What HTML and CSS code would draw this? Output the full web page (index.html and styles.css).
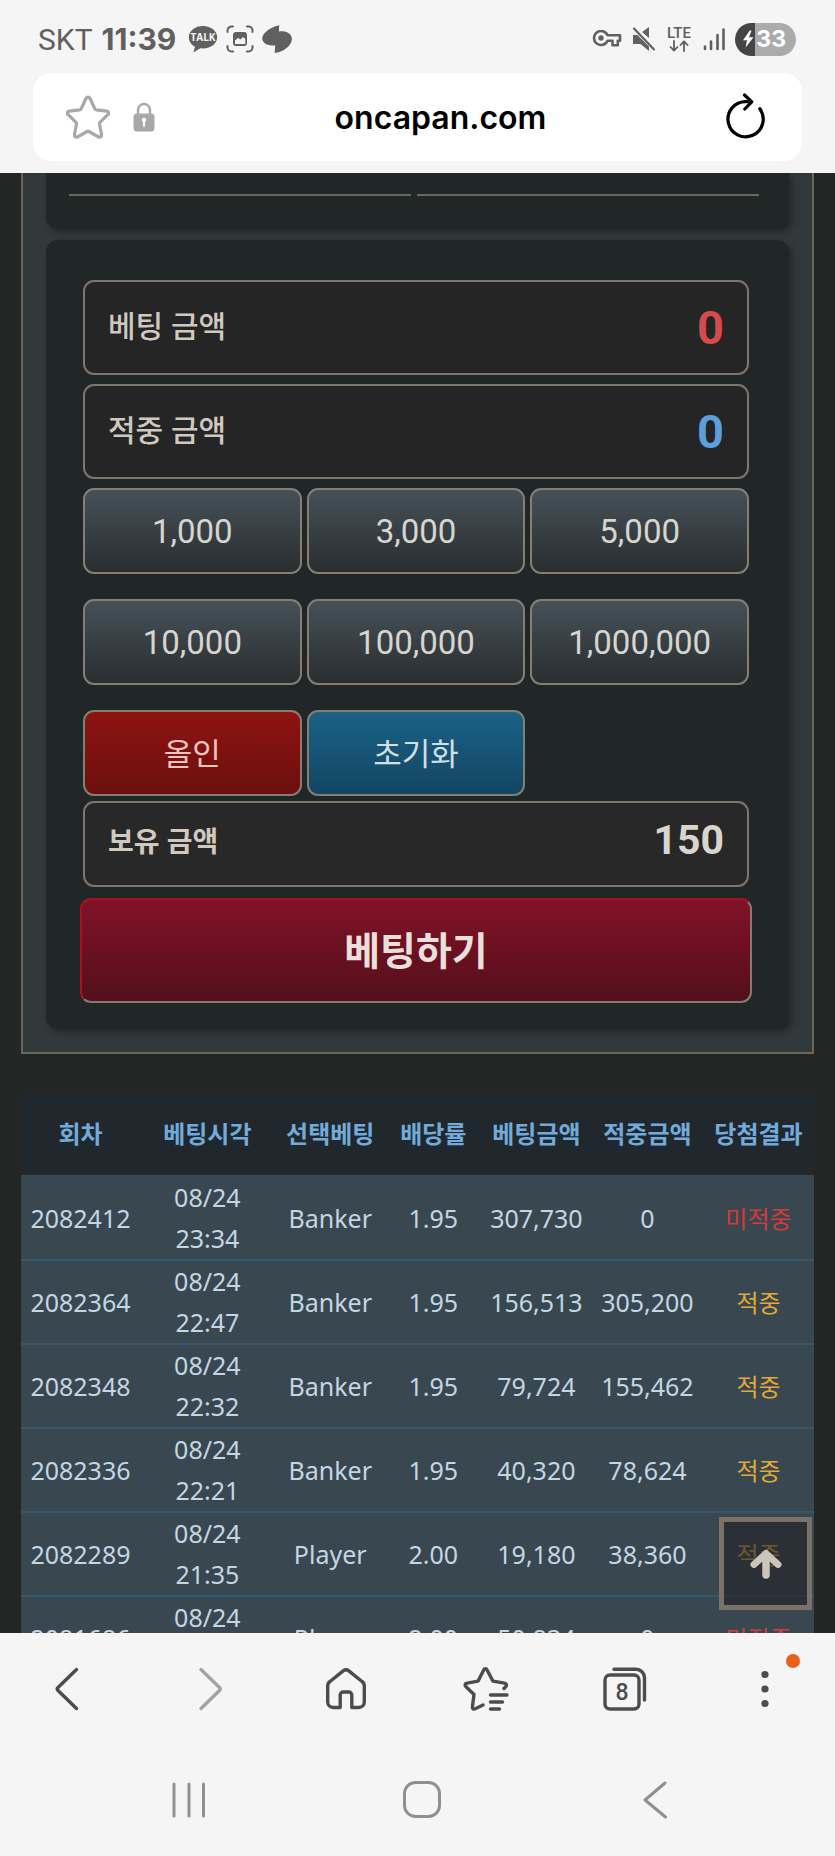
FILE: index.html
```html
<!DOCTYPE html>
<html lang="ko">
<head>
<meta charset="utf-8">
<meta name="viewport" content="width=device-width, initial-scale=1">
<title>oncapan.com</title>
<link rel="stylesheet" href="styles.css">
</head>
<body>
<div class="screen">
  <header class="chrome-top">
    <div class="status">
      <span class="carrier">SKT</span>
      <span class="clock">11:39</span>
      <div class="status-group">
        <svg width="30" height="28" viewBox="0 0 30 28" role="img" aria-label="TALK">
          <path fill="#606060" d="M15 1C7 1 .8 5.900.8 12.200c0 4 2.500 7.500 6.200 9.500L5.400 27.500l7-4.200c.8.1 1.700.1 2.600.1 8 0 14.200-5 14.200-11.200S23 1 15 1z"/>
          <text x="15" y="16" text-anchor="middle" class="talk-text">TALK</text>
        </svg>
        <svg width="28" height="28" viewBox="0 0 28 28" aria-hidden="true">
          <g fill="none" stroke="#606060" stroke-width="2" stroke-linecap="round">
            <path d="M1.500 7V5.500a4 4 0 0 1 4-4H7M21 1.500h1.500a4 4 0 0 1 4 4V7M26.500 21v1.500a4 4 0 0 1-4 4H21M7 26.500H5.500a4 4 0 0 1-4-4V21"/>
          </g>
          <rect x="7" y="7" width="14" height="14" rx="3" fill="#606060"/>
          <path fill="#f5f5f5" d="M9 19v-3.500l3-2.500 2.500 1.500L17 12l2.300 2v5z"/>
        </svg>
        <svg width="30" height="28" viewBox="0 0 30 28" aria-hidden="true">
          <path fill="#606060" d="M17.500.3C12 1.300 6.500 4 3 7.700.8 10 0 12.300.3 14.300c.5 3.500 4.200 5.700 8.700 6.100 1.500.1 3 .1 4.200-.2l-.6 7.800c7-.8 12.700-4.500 15.600-9 1.500-2.300 1.900-4.600 1.500-6.500-.7-3.700-4.200-5.900-8.700-6.300-1.500-.1-2.800 0-4 .2-.1-2.100 0-4.100.5-6.100z"/>
        </svg>
      </div>
      <div class="status-group status-right">
        <svg width="30" height="18" viewBox="0 0 30 18" aria-hidden="true">
          <path fill="none" stroke="#606060" stroke-width="2.600" stroke-linejoin="round" d="M15.500 5.300H28v5.400h-2.200v4.600h-5.300v-4.600h-5a7 7 0 1 1 0-5.400z"/>
          <circle cx="9" cy="8" r="2.700" fill="#606060"/>
        </svg>
        <svg width="25" height="26" viewBox="0 0 25 26" aria-hidden="true">
          <path fill="#606060" d="M18 1v11L11 6zM2 9h4.500L18 20.500V25l-8.500-7H2z"/>
          <path stroke="#606060" stroke-width="2.200" stroke-linecap="round" d="M3 2.500 23 23.500"/>
        </svg>
        <svg width="28" height="32" viewBox="0 0 28 32" role="img" aria-label="LTE">
          <text x="14" y="15" text-anchor="middle" class="lte-text">LTE</text>
          <path fill="none" stroke="#606060" stroke-width="1.800" stroke-linecap="round" stroke-linejoin="round" d="M9 18v9.500M5.500 24 9 27.700l3.500-3.700M19 28v-9.500M15.500 22 19 18.300l3.500 3.700"/>
        </svg>
        <svg width="24" height="24" viewBox="0 0 24 24" aria-hidden="true">
          <path stroke="#606060" stroke-width="2.600" stroke-linecap="round" d="M3 19.500V22M9 14.500V22M15.500 8V22M21.500 2.500V22"/>
        </svg>
        <div class="battery">
          <svg width="12" height="18" viewBox="0 0 12 18" aria-hidden="true"><path fill="#fff" d="M7.800.5 1 10.200h4L3.600 17.500 11.500 7.300H7L9.500.5z"/></svg>
          <span>33</span>
        </div>
      </div>
    </div>
    <div class="address">
      <button class="bare" aria-label="즐겨찾기">
        <svg width="44" height="44" viewBox="0 0 44 44"><path fill="none" stroke="#a8a8a8" stroke-width="3.200" stroke-linejoin="round" d="M20 3.500c1-2 3-2 4 0l5 10.500c.2.500.6.700 1.100.8l10.600 1.300c2 .3 2.500 2.300 1.200 3.600l-8 7.700c-.4.400-.5.800-.4 1.300l2 10.800c.3 2-1.300 3.200-3.100 2.300l-9.400-5.300a2 2 0 0 0-2 0l-9.400 5.300c-1.800.9-3.400-.3-3.100-2.300l2-10.800c.1-.5 0-.9-.4-1.300l-8-7.700c-1.300-1.300-.8-3.300 1.200-3.600l10.600-1.300c.5-.1.900-.3 1.100-.8z"/></svg>
      </button>
      <svg width="22" height="30" viewBox="0 0 22 30" aria-hidden="true">
        <path fill="none" stroke="#a8a8a8" stroke-width="2.400" d="M5 13V8a6 6 0 0 1 12 0v5"/>
        <rect x=".5" y="11.500" width="21" height="18" rx="3.500" fill="#a8a8a8"/>
        <circle cx="11" cy="18" r="2.200" fill="#fff"/><rect x="10" y="18" width="2" height="7" rx="1" fill="#fff"/>
      </svg>
      <input class="url" type="text" aria-label="주소" value="oncapan.com">
      <button class="bare" aria-label="새로고침">
        <svg width="40" height="48" viewBox="0 0 40 48"><g fill="none" stroke="#000" stroke-width="3.200" stroke-linecap="round" stroke-linejoin="round"><path d="M33.800 15.800A17.600 17.600 0 1 1 20 8.600h5"/><path d="m18.500 2 7.300 6.800-7 7.200"/></g></svg>
      </button>
    </div>
  </header>

  <main class="page">
    <div class="scroll">
      <section class="panel">
        <div class="card card-lines"><div class="line"></div><div class="line"></div></div>
        <form class="card card-bet">
          <div class="field">
            <label for="bet">베팅 금액</label><output id="bet" class="amount red">0</output>
          </div>
          <div class="field">
            <label for="win">적중 금액</label><output id="win" class="amount blue">0</output>
          </div>
          <div class="chips">
            <button type="button" class="chip">1,000</button>
            <button type="button" class="chip">3,000</button>
            <button type="button" class="chip">5,000</button>
            <button type="button" class="chip">10,000</button>
            <button type="button" class="chip">100,000</button>
            <button type="button" class="chip">1,000,000</button>
            <button type="button" class="chip chip-red">올인</button>
            <button type="button" class="chip chip-blue">초기화</button>
          </div>
          <div class="field balance">
            <label for="own">보유 금액</label><output id="own" class="own">150</output>
          </div>
          <button type="button" class="submit">베팅하기</button>
        </form>
      </section>

      <table class="history">
        <colgroup><col class="c1"><col class="c2"><col class="c3"><col class="c4"><col class="c5"><col class="c6"><col class="c7"></colgroup>
        <thead>
          <tr><th>회차</th><th>베팅시각</th><th>선택베팅</th><th>배당률</th><th>베팅금액</th><th>적중금액</th><th>당첨결과</th></tr>
        </thead>
        <tbody>
          <tr><td>2082412</td><td>08/24<br>23:34</td><td>Banker</td><td>1.95</td><td>307,730</td><td>0</td><td class="miss">미적중</td></tr>
          <tr><td>2082364</td><td>08/24<br>22:47</td><td>Banker</td><td>1.95</td><td>156,513</td><td>305,200</td><td class="hit">적중</td></tr>
          <tr><td>2082348</td><td>08/24<br>22:32</td><td>Banker</td><td>1.95</td><td>79,724</td><td>155,462</td><td class="hit">적중</td></tr>
          <tr><td>2082336</td><td>08/24<br>22:21</td><td>Banker</td><td>1.95</td><td>40,320</td><td>78,624</td><td class="hit">적중</td></tr>
          <tr><td>2082289</td><td>08/24<br>21:35</td><td>Player</td><td>2.00</td><td>19,180</td><td>38,360</td><td class="hit">적중</td></tr>
          <tr><td>2081686</td><td>08/24<br>&nbsp;</td><td>Player</td><td>2.00</td><td>50,834</td><td>0</td><td class="miss">미적중</td></tr>
        </tbody>
      </table>
    </div>
    <button class="to-top" aria-label="맨 위로">
      <svg width="32" height="30" viewBox="0 0 32 30"><path fill="none" stroke="#cbc5bb" stroke-width="7" stroke-linecap="round" stroke-linejoin="round" d="M4 15.500 16 4.500l12 11"/><path stroke="#cbc5bb" stroke-width="7.500" stroke-linecap="round" d="M16 6v20"/></svg>
    </button>
  </main>

  <footer class="chrome-bottom">
    <nav class="toolbar">
      <button class="tool" aria-label="뒤로"><svg width="44" height="44" viewBox="0 0 44 44"><path d="M31.500 2.500 13 20.500q-1.500 1.500 0 3l18.500 18"/></svg></button>
      <button class="tool dim" aria-label="앞으로"><svg width="44" height="44" viewBox="0 0 44 44"><path d="m16 2.500 18.500 18q1.500 1.500 0 3L16 41.500"/></svg></button>
      <button class="tool" aria-label="홈"><svg width="44" height="44" viewBox="0 0 44 44"><path d="M19.500 3.700a4 4 0 0 1 5 0L38 14.500a5 5 0 0 1 2.300 4.200V35a5.500 5.500 0 0 1-5.500 5.500h-7V28a3 3 0 0 0-3-3h-5.600a3 3 0 0 0-3 3v12.500h-7A5.500 5.500 0 0 1 3.700 35V18.700A5 5 0 0 1 6 14.500z"/></svg></button>
      <button class="tool" aria-label="북마크 목록"><svg width="46" height="44" viewBox="0 0 46 44"><path d="m20 38-7.800 3.800c-1.800.8-3-.3-2.800-1.800L11 27.500 3 19.800c-1.500-1.500-1-3.300 1-3.600l11-2L20.700 3c.8-1.700 2.600-1.700 3.400 0L30 14.200l11.500 2c2 .3 2.600 2 1.200 3.600L41 21.500M27.500 28H44M27.500 35H39.500M27.500 42h9"/></svg></button>
      <button class="tool" aria-label="탭"><svg width="44" height="44" viewBox="0 0 44 44"><rect x="2" y="8" width="34" height="34" rx="5"/><path d="M11 2.300h22a8.500 8.500 0 0 1 8.500 8.500V33"/><text x="19" y="33" text-anchor="middle" class="tab-count">8</text></svg></button>
      <button class="tool menu" aria-label="메뉴"><svg width="44" height="44" viewBox="0 0 44 44"><g fill="#4c4c4e" stroke="none"><circle cx="22" cy="7.500" r="3.600"/><circle cx="22" cy="22" r="3.600"/><circle cx="22" cy="36.500" r="3.600"/></g></svg></button>
    </nav>
    <nav class="sysnav">
      <button class="tool sys" aria-label="최근 앱"><svg width="40" height="40" viewBox="0 0 40 40"><path d="M5 4v32M20 4v32M34.500 4v32"/></svg></button>
      <button class="tool sys" aria-label="홈 화면"><svg width="40" height="40" viewBox="0 0 40 40"><rect x="2.500" y="2.500" width="35" height="34" rx="11"/></svg></button>
      <button class="tool sys" aria-label="뒤로 가기"><svg width="40" height="40" viewBox="0 0 40 40"><path d="M30 3 10 20l20.500 17"/></svg></button>
    </nav>
  </footer>
</div>
</body>
</html>
```
FILE: styles.css
```css
* { box-sizing: border-box; }

body {
  margin: 0;
  background: #f5f5f5;
  font-family: "Noto Sans", "Noto Sans CJK KR", sans-serif;
}

button {
  margin: 0;
  padding: 0;
  font: inherit;
  cursor: pointer;
}

svg { display: block; flex: none; }

.screen {
  display: flex;
  flex-direction: column;
  height: 100vh;
}

/* Browser chrome, top */
.chrome-top { flex: none; padding-bottom: 12px; }

.status {
  display: flex;
  align-items: center;
  height: 73px;
  padding: 5px 39px 0 38px;
  color: #606060;
  font-family: Inter, Roboto, sans-serif;
  font-size: 30px;
}
.carrier { font-family: Roboto, sans-serif; }
.clock { margin-left: 9px; font-weight: 700; }
.status-group { display: flex; align-items: center; gap: 8px; margin-left: 12px; }
.status-right { gap: 9px; margin-left: auto; }
.talk-text { font: 700 10px "Open Sans", sans-serif; fill: #f5f5f5; }
.lte-text { font: 500 15px Roboto, sans-serif; fill: #606060; }

.battery {
  display: flex;
  align-items: center;
  gap: 2px;
  height: 33px;
  padding: 0 10px 0 7px;
  border-radius: 17px;
  background: linear-gradient(to right, #454545 33%, #ababab 33%);
  color: #fff;
  font-size: 23px;
  font-weight: 700;
}

.address {
  display: flex;
  align-items: center;
  height: 88px;
  margin: 0 33px;
  padding: 0 36px 0 33px;
  border-radius: 18px;
  background: #fff;
}
.address > svg { margin-left: 23px; }
.bare { border: 0; background: none; }
.url {
  flex: 1;
  min-width: 0;
  border: 0;
  padding: 0;
  background: none;
  color: #000;
  font: 600 32px Inter, sans-serif;
  text-align: center;
}

/* Page */
.page {
  position: relative;
  flex: 1;
  min-height: 0;
  background: #242625;
}
.scroll { height: 100%; padding: 0 21px; overflow: hidden; }

.panel {
  padding: 0 23px 23px;
  border: 2px solid #69665e;
  border-top: 0;
  background: #32393b;
}
.card {
  border-radius: 12px;
  background: #212626;
  box-shadow: 3px 3px 6px rgba(0, 0, 0, 0.3);
}
.card-lines {
  display: flex;
  gap: 6px;
  padding: 0 30px 33px 23px;
  border-radius: 0 0 12px 12px;
}
.line { flex: 1; height: 23px; border-bottom: 2px solid #69675f; }
.card-bet { margin-top: 11px; padding: 40px 40px 26px 37px; }

.field {
  display: flex;
  align-items: center;
  justify-content: space-between;
  height: 95px;
  margin-bottom: 9px;
  padding: 0 23px;
  border: 2px solid #7c776d;
  border-radius: 11px;
  background: #242524;
  color: #cfc9c0;
  font-size: 30px;
  font-weight: 500;
}
.field label { padding-bottom: 8px; }
.amount { font: 700 47px Roboto, sans-serif; }
.red { color: #d44c4a; }
.blue { color: #5c9fdc; }

.chips {
  display: grid;
  grid-template-columns: repeat(3, 1fr);
  gap: 25px 5px;
}
.chip {
  height: 86px;
  border: 2px solid #857e75;
  border-radius: 11px;
  background: linear-gradient(#455157, #2a2e31);
  color: #d8d4ce;
  font: 400 33px Roboto, "Noto Sans CJK KR", sans-serif;
}
.chip-red,
.chip-blue {
  padding-bottom: 4px;
  font-size: 31px;
}
.chip-red { background: linear-gradient(#8e1311, #6b100f); color: #edc5be; }
.chip-blue { background: linear-gradient(#1a6286, #134564); color: #d3dfe4; }

.balance {
  height: 86px;
  margin: 5px 0 11px;
  padding-bottom: 8px;
  background: #272827;
  font-size: 28px;
  font-weight: 700;
}
.balance label { padding-bottom: 0; }
.own { font: 700 41px Roboto, sans-serif; color: #dad5cc; }

.submit {
  display: block;
  width: calc(100% + 6px);
  height: 105px;
  margin: 0 -3px;
  padding-bottom: 6px;
  border: 2px solid;
  border-color: #a5131e #857b75 #857b75 #a5131e;
  border-radius: 11px;
  background: linear-gradient(#821228, #530f1b);
  color: #eadfdc;
  font-size: 39px;
  font-weight: 700;
}

.history {
  width: 100%;
  margin-top: 39px;
  border-collapse: separate;
  border-spacing: 0;
  table-layout: fixed;
  background: #394750;
  color: #c3d6e4;
  font-size: 25px;
  line-height: 41px;
  text-align: center;
}
.c1 { width: 15%; }
.c2 { width: 17%; }
.c3 { width: 14%; }
.c4 { width: 12%; }
.c5 { width: 14%; }
.c6 { width: 14%; }
.c7 { width: 14%; }
.history th {
  height: 84px;
  padding: 0 0 2px;
  border-bottom: 2px solid #394750;
  background: #20272d;
  background-clip: padding-box;
  color: #72abd9;
  font-size: 24px;
  white-space: nowrap;
}
.history td { height: 84px; padding: 0; border-bottom: 2px solid #3a566a; }
.history .miss { color: #d23c3b; font-size: 24px; }
.history .hit { color: #e0a93a; font-size: 24px; }

.to-top {
  position: absolute;
  right: 23px;
  bottom: 23px;
  display: grid;
  place-items: center;
  width: 93px;
  height: 93px;
  border: 5px solid #7a7269;
  background: rgba(33, 33, 36, 0.6);
  background-clip: padding-box;
}

/* Browser chrome, bottom */
.chrome-bottom { flex: none; }
.toolbar {
  display: flex;
  align-items: center;
  justify-content: space-between;
  height: 112px;
  padding: 0 40px 0 37px;
}
.sysnav {
  display: flex;
  align-items: center;
  justify-content: space-between;
  height: 111px;
  padding: 0 18% 2px 19%;
}
.tool {
  position: relative;
  display: grid;
  place-items: center;
  width: 60px;
  height: 60px;
  border: 0;
  background: none;
}
.tool svg {
  fill: none;
  stroke: #4c4c4e;
  stroke-width: 3.4;
  stroke-linecap: round;
  stroke-linejoin: round;
}
.dim svg { stroke: #a3a3a4; }
.sys svg { stroke: #909090; stroke-width: 3; }
.tool .tab-count { font: 500 23px Roboto, sans-serif; fill: #4c4c4e; stroke: none; }
.menu::after {
  content: "";
  position: absolute;
  top: -5px;
  right: -5px;
  width: 14px;
  height: 14px;
  border-radius: 50%;
  background: #ea5f1b;
}
```
